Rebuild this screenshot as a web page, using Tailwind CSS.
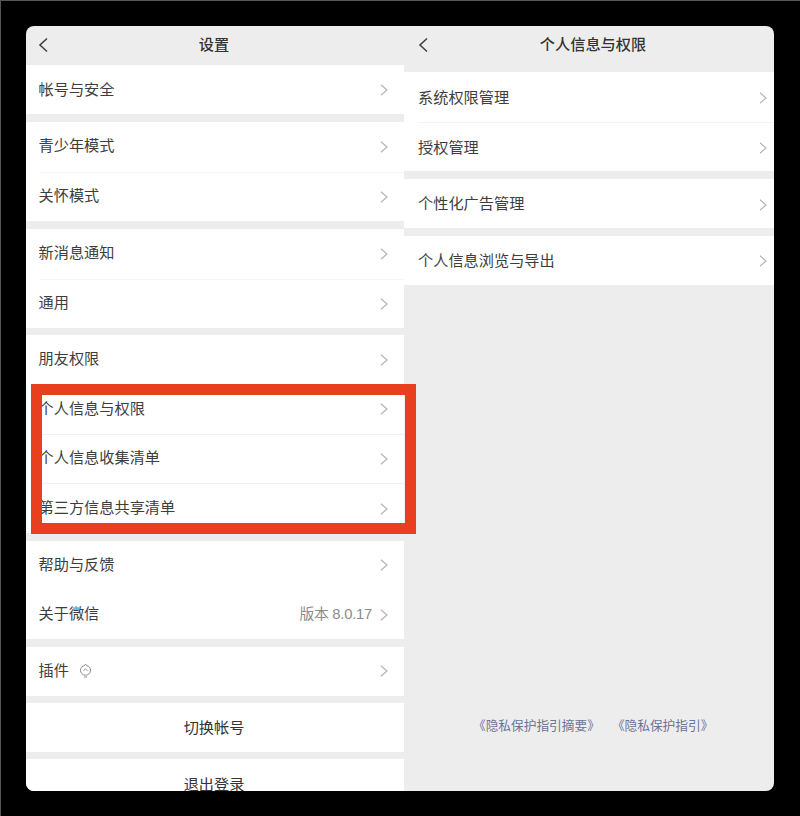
<!DOCTYPE html>
<html lang="zh"><head><meta charset="utf-8"><script src="https://cdn.jsdelivr.net/npm/@tailwindcss/browser@4"></script></head>
<body class="m-0 bg-black">
<div class="w-[800px] h-[816px] bg-black overflow-hidden relative border-l border-t border-[#555] box-border" style="font-family:'Liberation Sans','Noto Sans CJK SC',sans-serif">
  <div class="w-[748px] h-[765px] ml-[25px] mt-[25px] rounded-[8px] overflow-hidden bg-[#eeedee] flex text-[15.2px] text-[#3d3d3d]">
    <!-- left -->
    <div class="w-[378px] shrink-0 flex flex-col">
      <div class="h-[39px] shrink-0 relative flex items-center justify-center font-medium text-[#333] pr-[2px]">
        <svg class="absolute left-[12px] top-[11px]" width="11" height="16" viewBox="0 0 11 16" fill="none" stroke="#444" stroke-width="1.6"><path d="M9 1.5 2 8l7 6.5"/></svg>
        <span>设置</span>
      </div>
      <div class="flex flex-col">
        <div class="bg-white flex flex-col mb-[8px]">
          <div class="h-[49px] pt-px flex items-center ml-[12.5px] pr-[16px] justify-between"><span>帐号与安全</span><svg width="8" height="12" viewBox="0 0 8 12" fill="none" stroke="#b5b5b5" stroke-width="1.2"><path d="M1 .8 7 6l-6 5.2"/></svg></div>
        </div>
        <div class="bg-white flex flex-col mb-[8px]">
          <div class="h-[49.5px] flex items-center ml-[12.5px] pr-[16px] justify-between"><span>青少年模式</span><svg width="8" height="12" viewBox="0 0 8 12" fill="none" stroke="#b5b5b5" stroke-width="1.2"><path d="M1 .8 7 6l-6 5.2"/></svg></div>
          <div class="h-[49.5px] flex items-center ml-[12.5px] pr-[16px] justify-between border-t border-[#f6f6f6]"><span>关怀模式</span><svg width="8" height="12" viewBox="0 0 8 12" fill="none" stroke="#b5b5b5" stroke-width="1.2"><path d="M1 .8 7 6l-6 5.2"/></svg></div>
        </div>
        <div class="bg-white flex flex-col mb-[7.5px]">
          <div class="h-[49.5px] flex items-center ml-[12.5px] pr-[16px] justify-between"><span>新消息通知</span><svg width="8" height="12" viewBox="0 0 8 12" fill="none" stroke="#b5b5b5" stroke-width="1.2"><path d="M1 .8 7 6l-6 5.2"/></svg></div>
          <div class="h-[49px] flex items-center ml-[12.5px] pr-[16px] justify-between border-t border-[#f6f6f6]"><span>通用</span><svg width="8" height="12" viewBox="0 0 8 12" fill="none" stroke="#b5b5b5" stroke-width="1.2"><path d="M1 .8 7 6l-6 5.2"/></svg></div>
        </div>
        <div class="bg-white flex flex-col mb-[7.5px]">
          <div class="h-[49px] flex items-center ml-[12.5px] pr-[16px] justify-between"><span>朋友权限</span><svg width="8" height="12" viewBox="0 0 8 12" fill="none" stroke="#b5b5b5" stroke-width="1.2"><path d="M1 .8 7 6l-6 5.2"/></svg></div>
          <div class="h-[49.5px] flex items-center ml-[12.5px] pr-[16px] justify-between border-t border-[#f6f6f6]"><span>个人信息与权限</span><svg width="8" height="12" viewBox="0 0 8 12" fill="none" stroke="#b5b5b5" stroke-width="1.2"><path d="M1 .8 7 6l-6 5.2"/></svg></div>
          <div class="h-[49.5px] flex items-center ml-[12.5px] pr-[16px] justify-between border-t border-[#f1f1f1]"><span>个人信息收集清单</span><svg width="8" height="12" viewBox="0 0 8 12" fill="none" stroke="#b5b5b5" stroke-width="1.2"><path d="M1 .8 7 6l-6 5.2"/></svg></div>
          <div class="h-[50px] flex items-center ml-[12.5px] pr-[16px] justify-between border-t border-[#f1f1f1]"><span>第三方信息共享清单</span><svg width="8" height="12" viewBox="0 0 8 12" fill="none" stroke="#b5b5b5" stroke-width="1.2"><path d="M1 .8 7 6l-6 5.2"/></svg></div>
        </div>
        <div class="bg-white flex flex-col mb-[7.5px]">
          <div class="h-[49.5px] flex items-center ml-[12.5px] pr-[16px] justify-between"><span>帮助与反馈</span><svg width="8" height="12" viewBox="0 0 8 12" fill="none" stroke="#b5b5b5" stroke-width="1.2"><path d="M1 .8 7 6l-6 5.2"/></svg></div>
          <div class="h-[49px] flex items-center ml-[12.5px] pr-[16px] justify-between"><span>关于微信</span><span class="flex items-center gap-[8px] text-[#8c8c8c]"><span class="text-[14.8px] tracking-[-0.25px]">版本 8.0.17</span><svg width="8" height="12" viewBox="0 0 8 12" fill="none" stroke="#b5b5b5" stroke-width="1.2"><path d="M1 .8 7 6l-6 5.2"/></svg></span></div>
        </div>
        <div class="bg-white flex flex-col mb-[7px]">
          <div class="h-[49px] flex items-center ml-[12.5px] pr-[16px] justify-between"><span class="flex items-center gap-[10px]"><span>插件</span><svg width="13" height="15" viewBox="0 0 13 15" fill="none" stroke="#8f8f8f" stroke-width="1"><path d="M6.5 1 7.5 2.6C9.8 3 11.6 4.8 11.6 7.2 11.6 10 9.3 12.2 6.5 12.2S1.4 10 1.4 7.2C1.4 4.8 3.2 3 5.5 2.6Z"/><path d="M4.5 7.6 6.5 6l2 1.6"/><path d="M5 14h3"/></svg></span><svg width="8" height="12" viewBox="0 0 8 12" fill="none" stroke="#b5b5b5" stroke-width="1.2"><path d="M1 .8 7 6l-6 5.2"/></svg></div>
        </div>
        <div class="bg-white h-[49px] mb-[7px] pt-[2px] flex items-center justify-center text-[#333] pr-[2px]">切换帐号</div>
        <div class="bg-white h-[49px] pt-[4px] flex items-center justify-center text-[#333] pr-[2px]">退出登录</div>
      </div>
    </div>
    <!-- right -->
    <div class="flex-1 flex flex-col relative">
      <div class="h-[46px] shrink-0 relative flex items-center justify-center font-medium text-[#333] pb-[8px] pl-[8px]">
        <svg class="absolute left-[13.5px] top-[11px]" width="11" height="16" viewBox="0 0 11 16" fill="none" stroke="#444" stroke-width="1.6"><path d="M9 1.5 2 8l7 6.5"/></svg>
        <span>个人信息与权限</span>
      </div>
      <div class="flex flex-col gap-[7.5px]">
        <div class="bg-white flex flex-col">
          <div class="h-[50px] pt-[2px] flex items-center ml-[14px] pr-[7px] justify-between"><span>系统权限管理</span><svg width="8" height="12" viewBox="0 0 8 12" fill="none" stroke="#b5b5b5" stroke-width="1.2"><path d="M1 .8 7 6l-6 5.2"/></svg></div>
          <div class="h-[49px] pt-[2px] flex items-center ml-[14px] pr-[7px] justify-between border-t border-[#f3f3f3]"><span>授权管理</span><svg width="8" height="12" viewBox="0 0 8 12" fill="none" stroke="#b5b5b5" stroke-width="1.2"><path d="M1 .8 7 6l-6 5.2"/></svg></div>
        </div>
        <div class="bg-white h-[49.5px] pt-[3px] flex items-center pl-[14px] pr-[7px] justify-between"><span>个性化广告管理</span><svg width="8" height="12" viewBox="0 0 8 12" fill="none" stroke="#b5b5b5" stroke-width="1.2"><path d="M1 .8 7 6l-6 5.2"/></svg></div>
        <div class="bg-white h-[49.5px] pt-[2px] flex items-center pl-[14px] pr-[7px] justify-between"><span>个人信息浏览与导出</span><svg width="8" height="12" viewBox="0 0 8 12" fill="none" stroke="#b5b5b5" stroke-width="1.2"><path d="M1 .8 7 6l-6 5.2"/></svg></div>
      </div>
      <div class="absolute left-[69px] top-[691px] flex gap-[12px] text-[12.7px] text-[#6b7596] leading-[18px]">
        <span>《隐私保护指引摘要》</span><span>《隐私保护指引》</span>
      </div>
    </div>
  </div>
  <div class="absolute left-[30px] top-[383px] w-[385px] h-[150px] border-[11px] border-[#e8401f]"></div>
</div>
</body></html>
